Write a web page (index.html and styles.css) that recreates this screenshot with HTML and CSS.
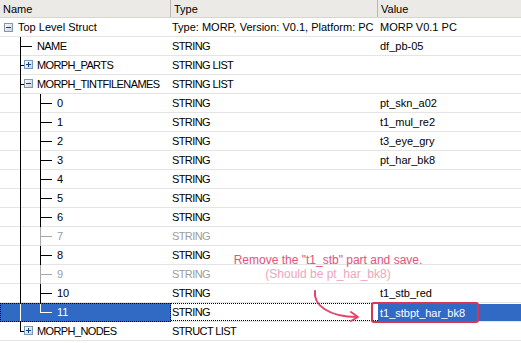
FILE: index.html
```html
<!DOCTYPE html>
<html lang="en">
<head>
  <meta charset="UTF-8" />
  <title>Struct Editor</title>
  <link rel="stylesheet" href="styles.css">
</head>
<body>
  <div class="grid">
    <div class="head">
      <div class="hcell">Name</div>
      <div class="hcell">Type</div>
      <div class="hcell">Value</div>
    </div>

    <div class="row">
      <div class="name"><span class="top"><svg class="box" width="9" height="9" viewBox="0 0 9 9"><rect x="0.5" y="0.5" width="8" height="8" fill="url(#bx)" stroke="#7d98b3"/><path d="M2 4.5h5" stroke="#1c3f7a"/></svg></span>Top Level Struct</div>
      <div class="cell">Type: MORP, Version: V0.1, Platform: PC</div>
      <div class="cell val">MORP V0.1 PC</div>
    </div>
    <div class="row">
      <div class="name cap"><span class="sp"></span><span class="branch"></span>NAME</div>
      <div class="cell cap">STRING</div>
      <div class="cell val">df_pb-05</div>
    </div>
    <div class="row">
      <div class="name cap"><span class="sp"></span><span class="branch"><svg class="box" width="9" height="9" viewBox="0 0 9 9"><rect x="0.5" y="0.5" width="8" height="8" fill="url(#bx)" stroke="#7d98b3"/><path d="M2 4.5h5M4.5 2v5" stroke="#1c3f7a"/></svg></span>MORPH_PARTS</div>
      <div class="cell cap">STRING LIST</div>
      <div class="cell val"></div>
    </div>
    <div class="row">
      <div class="name cap"><span class="sp"></span><span class="branch"><svg class="box" width="9" height="9" viewBox="0 0 9 9"><rect x="0.5" y="0.5" width="8" height="8" fill="url(#bx)" stroke="#7d98b3"/><path d="M2 4.5h5" stroke="#1c3f7a"/></svg></span>MORPH_TINTFILENAMES</div>
      <div class="cell cap">STRING LIST</div>
      <div class="cell val"></div>
    </div>
    <div class="row">
      <div class="name"><span class="sp"></span><span class="pipe"></span><span class="branch"></span>0</div>
      <div class="cell cap">STRING</div>
      <div class="cell val">pt_skn_a02</div>
    </div>
    <div class="row">
      <div class="name"><span class="sp"></span><span class="pipe"></span><span class="branch"></span>1</div>
      <div class="cell cap">STRING</div>
      <div class="cell val">t1_mul_re2</div>
    </div>
    <div class="row">
      <div class="name"><span class="sp"></span><span class="pipe"></span><span class="branch"></span>2</div>
      <div class="cell cap">STRING</div>
      <div class="cell val">t3_eye_gry</div>
    </div>
    <div class="row">
      <div class="name"><span class="sp"></span><span class="pipe"></span><span class="branch"></span>3</div>
      <div class="cell cap">STRING</div>
      <div class="cell val">pt_har_bk8</div>
    </div>
    <div class="row">
      <div class="name"><span class="sp"></span><span class="pipe"></span><span class="branch"></span>4</div>
      <div class="cell cap">STRING</div>
      <div class="cell val"></div>
    </div>
    <div class="row">
      <div class="name"><span class="sp"></span><span class="pipe"></span><span class="branch"></span>5</div>
      <div class="cell cap">STRING</div>
      <div class="cell val"></div>
    </div>
    <div class="row">
      <div class="name"><span class="sp"></span><span class="pipe"></span><span class="branch"></span>6</div>
      <div class="cell cap">STRING</div>
      <div class="cell val"></div>
    </div>
    <div class="row off">
      <div class="name"><span class="sp"></span><span class="pipe"></span><span class="branch"></span>7</div>
      <div class="cell cap">STRING</div>
      <div class="cell val"></div>
    </div>
    <div class="row">
      <div class="name"><span class="sp"></span><span class="pipe"></span><span class="branch"></span>8</div>
      <div class="cell cap">STRING</div>
      <div class="cell val"></div>
    </div>
    <div class="row off">
      <div class="name"><span class="sp"></span><span class="pipe"></span><span class="branch"></span>9</div>
      <div class="cell cap">STRING</div>
      <div class="cell val"></div>
    </div>
    <div class="row">
      <div class="name"><span class="sp"></span><span class="pipe"></span><span class="branch"></span>10</div>
      <div class="cell cap">STRING</div>
      <div class="cell val">t1_stb_red</div>
    </div>
    <div class="row sel">
      <div class="name"><span class="sp"></span><span class="pipe"></span><span class="branch last"></span>11</div>
      <div class="cell cap">STRING</div>
      <div class="cell val"><span class="edit">t1_stbpt_har_bk8</span></div>
    </div>
    <div class="row">
      <div class="name cap"><span class="sp"></span><span class="branch last"><svg class="box" width="9" height="9" viewBox="0 0 9 9"><rect x="0.5" y="0.5" width="8" height="8" fill="url(#bx)" stroke="#7d98b3"/><path d="M2 4.5h5M4.5 2v5" stroke="#1c3f7a"/></svg></span>MORPH_NODES</div>
      <div class="cell cap">STRUCT LIST</div>
      <div class="cell val"></div>
    </div>
  </div>

  <!-- annotation drawn over the grid -->
  <div class="note">
    <div class="note-main">Remove the "t1_stb" part and save.</div>
    <div class="note-sub">(Should be pt_har_bk8)</div>
  </div>
  <svg class="arrow" width="60" height="40" viewBox="0 0 60 40">
    <path d="M4 2 C 2 16, 18 28, 46 28" fill="none" stroke="#e2466c" stroke-width="2" stroke-linecap="round"/>
    <path d="M40 23 L47 28 L40 32" fill="none" stroke="#e2466c" stroke-width="2" stroke-linecap="round" stroke-linejoin="round"/>
  </svg>
  <div class="mark"></div>

  <svg width="0" height="0" class="defs">
    <defs>
      <linearGradient id="bx" x1="0" y1="0" x2="1" y2="1">
        <stop offset="0" stop-color="#ffffff"/>
        <stop offset="1" stop-color="#c4d0dc"/>
      </linearGradient>
    </defs>
  </svg>
</body>
</html>
```

FILE: styles.css
```css
body {
  margin: 0;
  position: relative;
  width: 521px;
  height: 343px;
  overflow: hidden;
  background: #fff;
  color: #000;
  font-family: "Liberation Sans", Arial, sans-serif;
  font-size: 11px;
}
.defs {
  position: absolute;
}
.head, .row {
  display: grid;
  grid-template-columns: 171px 207px 1fr;
}
.head {
  height: 17px;
  background: #ebeae6;
  border-bottom: 1px solid #d6d5d0;
}
.hcell {
  display: flex;
  align-items: center;
  padding-left: 3px;
  border-right: 1px solid #b9b8b2;
}
.hcell:last-child {
  border-right: none;
}
.row {
  --ln: #000;
  height: 19px;
  box-shadow: inset 0 -1px #e4e4e4;
}
.name, .cell {
  display: flex;
  align-items: center;
  height: 19px;
  padding-bottom: 1px;
  box-sizing: border-box;
  white-space: nowrap;
  overflow: hidden;
}
.cap {
  letter-spacing: -0.6px;
}
.cell {
  padding-left: 1px;
}
.cell.val {
  padding-left: 2px;
}
.top {
  width: 18px;
  padding-left: 4px;
  box-sizing: border-box;
  display: flex;
  align-items: center;
}
.box {
  display: block;
}
.sp {
  width: 20px;
  height: 19px;
  flex: none;
}
.pipe {
  width: 20px;
  height: 19px;
  flex: none;
  background: linear-gradient(var(--ln), var(--ln)) 0 0 / 1px 100% no-repeat;
}
.branch {
  width: 17px;
  height: 19px;
  flex: none;
  display: flex;
  align-items: center;
  padding-left: 4px;
  padding-bottom: 1px;
  box-sizing: border-box;
  background:
    linear-gradient(var(--ln), var(--ln)) 0 0 / 1px 100% no-repeat,
    linear-gradient(var(--ln), var(--ln)) 0 9px / 12px 1px no-repeat;
}
.branch.last {
  background:
    linear-gradient(var(--ln), var(--ln)) 0 0 / 1px 10px no-repeat,
    linear-gradient(var(--ln), var(--ln)) 0 9px / 12px 1px no-repeat;
}
.branch .box {
  background: #fff;
}
.off .branch {
  --ln: #a8a8a8;
}
.off .name, .off .cell {
  color: #9c9c9c;
}
.sel .name {
  --ln: #fff;
  background: #316ac5;
  color: #fff;
  outline: 1px dotted #000;
  outline-offset: -1px;
}
.sel .cell {
  background-image:
    repeating-linear-gradient(90deg, #000 0 1px, transparent 1px 2px),
    repeating-linear-gradient(90deg, #000 0 1px, transparent 1px 2px);
  background-size: 100% 1px, 100% 1px;
  background-position: 0 0, 0 17px;
  background-repeat: no-repeat;
}
.sel .cell.val {
  background: #316ac5;
  color: #fff;
  margin-top: 1px;
  height: 17px;
  padding-bottom: 0;
}
.note {
  position: absolute;
  left: 222px;
  top: 253px;
  width: 212px;
  text-align: center;
  font-family: "Liberation Sans", Arial, sans-serif;
  font-size: 12px;
  line-height: 14px;
}
.note-main {
  color: #e4517a;
}
.note-sub {
  color: #f2a4bb;
}
.arrow {
  position: absolute;
  left: 311px;
  top: 289px;
}
.mark {
  position: absolute;
  left: 371px;
  top: 302px;
  width: 104px;
  height: 17px;
  border: 2px solid #d83553;
  border-radius: 3px;
}
```
